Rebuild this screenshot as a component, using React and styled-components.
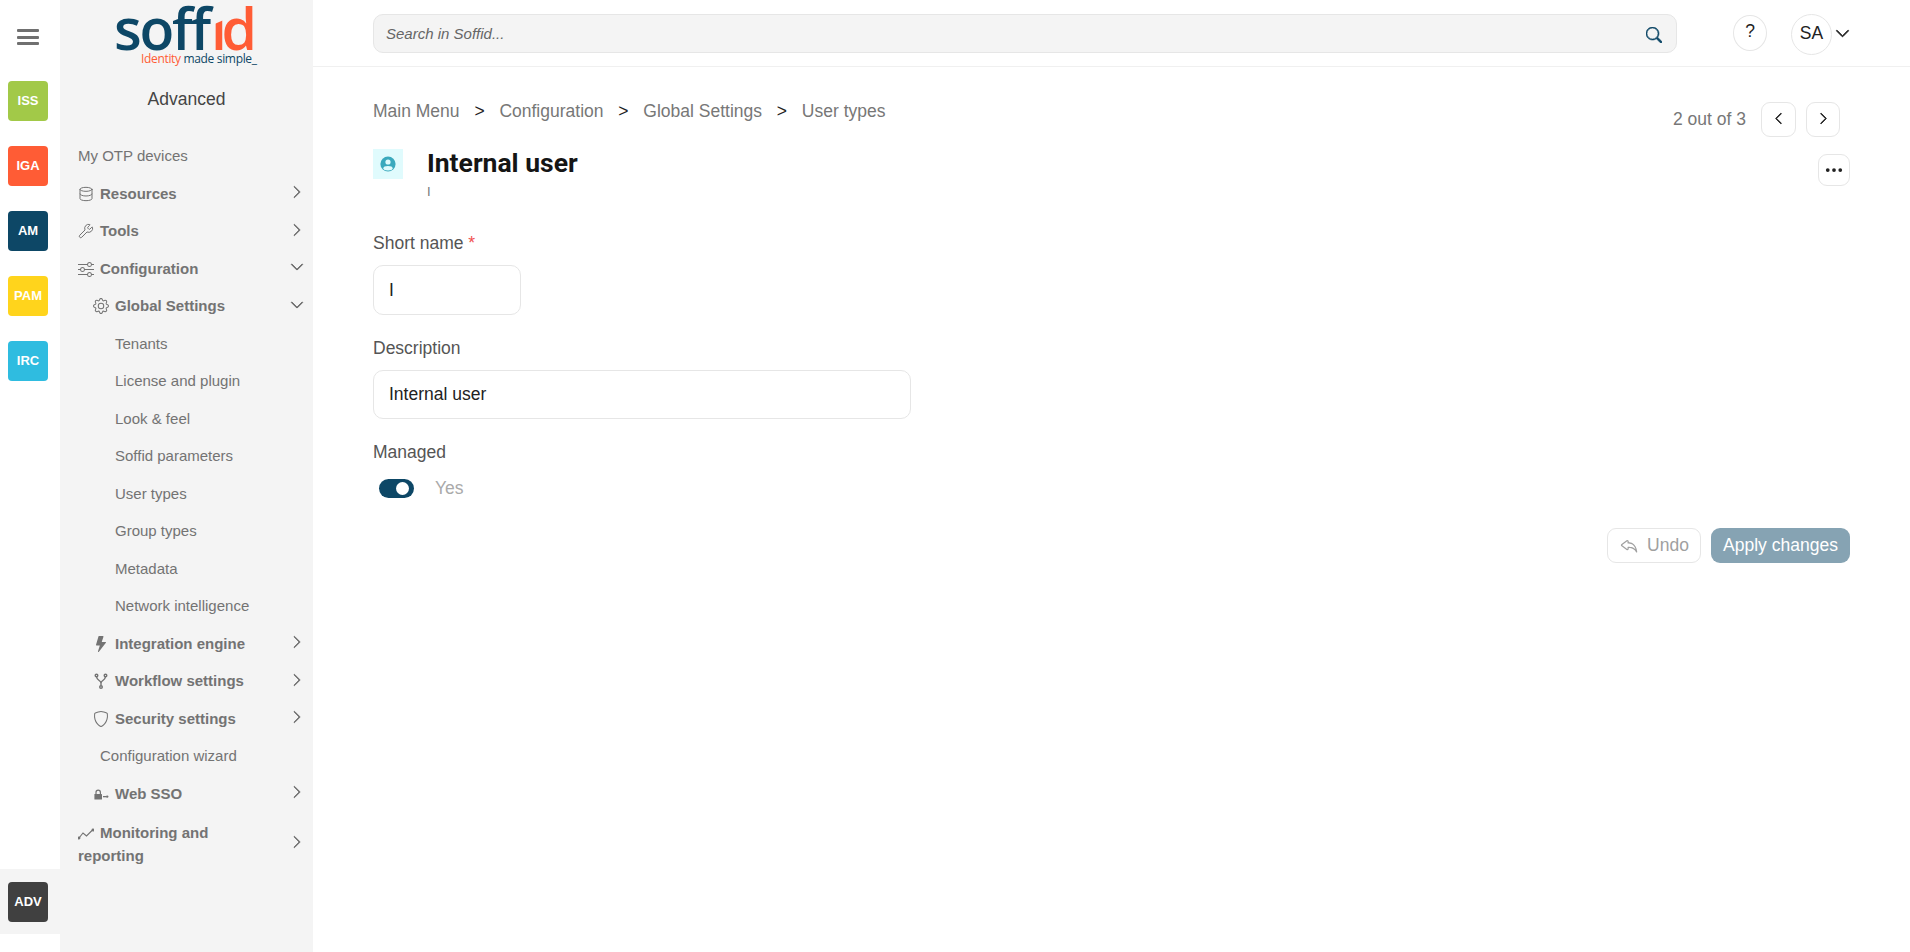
import React from 'react';
import styled, { createGlobalStyle } from 'styled-components';
import { Database, Wrench } from 'lucide-react';
import {
  BsSliders, BsGear, BsLightningFill, BsShield, BsThreeDots,
  BsChevronRight, BsChevronDown, BsChevronLeft, BsSearch, BsReply,
} from 'react-icons/bs';

const GlobalStyle = createGlobalStyle`
  html, body { margin: 0; padding: 0; background: white; }
  body { font-family: "Liberation Sans", Arial, sans-serif; }
`;

const Page = styled.div`
  display: flex;
  height: 952px;
  overflow: hidden;
`;

const Rail = styled.nav`
  width: 60px;
  flex-shrink: 0;
  display: flex;
  flex-direction: column;
  align-items: stretch;
  padding-bottom: 18px;
  box-sizing: border-box;
`;

const Burger = styled.div`
  height: 81px;
  padding: 29px 4px 0 0;
  box-sizing: border-box;
  display: flex;
  flex-direction: column;
  align-items: center;
  gap: 3.5px;
  span {
    width: 22px;
    height: 3px;
    background: #707070;
    border-radius: 1px;
  }
`;

const TileSlot = styled.div`
  display: flex;
  justify-content: center;
  padding: 12.5px 4px 12.5px 0;
  margin-top: ${(p) => (p.$first ? '-12.5px' : '0')};
  background: ${(p) => (p.$active ? '#f4f4f4' : 'transparent')};
`;

const BottomSlot = styled(TileSlot)`
  margin-top: auto;
  padding: 13px 4px 12px 0;
`;

const Tile = styled.div`
  width: 40px;
  height: 40px;
  box-sizing: border-box;
  padding-bottom: 2px;
  border-radius: 4px;
  background: ${(p) => p.$color};
  color: white;
  font-size: 13px;
  font-weight: bold;
  display: flex;
  align-items: center;
  justify-content: center;
`;

const Sidebar = styled.aside`
  width: 253px;
  flex-shrink: 0;
  background: #f4f4f4;
  box-sizing: border-box;
`;

const LogoBlock = styled.div`
  height: 137px;
  display: flex;
  flex-direction: column;
  align-items: center;
`;

const LogoSvg = styled.svg`
  display: block;
  font-family: "Open Sans", sans-serif;
  font-variant-ligatures: none;
`;

const Section = styled.div`
  margin-top: 20px;
  font-size: 17.5px;
  line-height: 24px;
  color: #444;
`;

const Menu = styled.div`
  display: flex;
  flex-direction: column;
`;

const Row = styled.div`
  min-height: 37.5px;
  display: flex;
  align-items: center;
  justify-content: space-between;
  box-sizing: border-box;
  padding: 6px 7px 6px ${(p) => p.$pad}px;
  color: #737373;
  font-size: 15px;
  line-height: 23px;
  font-weight: ${(p) => (p.$bold ? 'bold' : 'normal')};
`;

const RowLabel = styled.div`
  ${(p) => (p.$narrow ? 'width: 150px; margin-top: 3px;' : 'flex: 1;')}
  svg {
    vertical-align: -3px;
    margin-right: 6px;
  }
`;

const Arrow = styled.div`
  width: 16px;
  height: 16px;
  color: #606060;
  svg {
    display: block;
    stroke: currentColor;
    stroke-width: 0.7;
  }
`;

const Main = styled.main`
  flex: 1;
  display: flex;
  flex-direction: column;
`;

const Header = styled.header`
  height: 67px;
  box-sizing: border-box;
  border-bottom: 1px solid #f0f0f0;
  padding: 14px 60px 0;
  display: flex;
  align-items: flex-start;
`;

const Search = styled.div`
  width: 1304px;
  height: 39px;
  box-sizing: border-box;
  background: #f4f4f4;
  border: 1px solid #e6e6e6;
  border-radius: 10px;
  display: flex;
  align-items: center;
  justify-content: space-between;
  padding: 0 14px 0 12px;
  font-style: italic;
  font-size: 15px;
  color: #666;
  svg {
    color: #0d4766;
    margin-top: 2px;
    stroke: currentColor;
    stroke-width: 0.6;
  }
`;

const Help = styled.div`
  width: 34px;
  height: 36px;
  margin: 1px 0 0 56px;
  box-sizing: border-box;
  border: 1px solid #e6e6e6;
  border-radius: 50%;
  display: flex;
  align-items: center;
  justify-content: center;
  padding-bottom: 3px;
  font-size: 17.5px;
  color: #222;
`;

const Avatar = styled.div`
  width: 41px;
  height: 41px;
  margin-left: 24px;
  box-sizing: border-box;
  border: 1px solid #e6e6e6;
  border-radius: 50%;
  display: flex;
  align-items: center;
  justify-content: center;
  padding-bottom: 2px;
  font-size: 17.5px;
  color: #222;
`;

const Caret = styled.div`
  margin: 12px 0 0 3px;
  height: 15px;
  color: #222;
  svg {
    display: block;
    stroke: currentColor;
    stroke-width: 0.9;
  }
`;

const Content = styled.div`
  padding: 0 60px;
  display: flex;
  flex-direction: column;
`;

const TopLine = styled.div`
  height: 82px;
  display: flex;
  justify-content: space-between;
`;

const Crumbs = styled.div`
  display: flex;
  gap: 14.8px;
  margin-top: 32px;
  font-size: 17.5px;
  line-height: 24px;
  color: #777;
`;

const CrumbSep = styled.span`
  color: #222;
`;

const Pager = styled.div`
  display: flex;
  align-items: flex-start;
  margin: 35px 10px 0 0;
  font-size: 17.5px;
  color: #777;
`;

const PagerText = styled.div`
  line-height: 35px;
  margin-right: 15px;
`;

const SquareBtn = styled.div`
  width: ${(p) => p.$w || 35}px;
  height: ${(p) => p.$h || 35}px;
  margin-left: ${(p) => p.$gap || 0}px;
  box-sizing: border-box;
  border: 1px solid #e6e6e6;
  border-radius: 9px;
  background: white;
  color: #222;
  display: flex;
  align-items: center;
  justify-content: center;
  svg {
    margin-bottom: ${(p) => (p.$flat ? 0 : 3)}px;
    stroke: currentColor;
    stroke-width: ${(p) => (p.$flat ? 0 : 1)};
  }
`;

const TitleRow = styled.div`
  display: flex;
  align-items: flex-start;
  height: 82px;
`;

const TitleIcon = styled.div`
  width: 30px;
  height: 30px;
  background: #e0fbfd;
  display: flex;
  align-items: center;
  justify-content: center;
`;

const TitleText = styled.div`
  flex: 1;
  margin-left: 24px;
`;

const Title = styled.h1`
  margin: -2px 0 0;
  font-size: 26.5px;
  line-height: 32px;
  font-family: Roboto, sans-serif;
  font-weight: bold;
  color: #151515;
`;

const Subtitle = styled.div`
  margin-top: 6px;
  font-size: 13px;
  line-height: 14px;
  color: #777;
`;

const MoreWrap = styled.div`
  margin-top: 5px;
`;

const Label = styled.div`
  font-size: 17.5px;
  line-height: 24px;
  color: #555;
  i {
    font-style: normal;
    color: #f15050;
  }
`;

const Field = styled.div`
  width: ${(p) => p.$w}px;
  height: ${(p) => p.$h}px;
  margin: 10px 0 21px;
  box-sizing: border-box;
  border: 1px solid #e6e6e6;
  border-radius: 10px;
  padding: 0 15px;
  display: flex;
  align-items: center;
  font-size: 17.5px;
  color: #222;
`;

const ToggleRow = styled.div`
  display: flex;
  align-items: center;
  height: 24px;
  margin-top: 12px;
  padding-left: 6px;
  font-size: 17.5px;
  color: #aaa;
`;

const Toggle = styled.div`
  width: 35px;
  height: 19px;
  border-radius: 10px;
  background: #0d4766;
  margin-right: 21px;
  display: flex;
  align-items: center;
  justify-content: flex-end;
  padding-right: 5px;
  box-sizing: border-box;
  &::after {
    content: '';
    width: 13px;
    height: 13px;
    border-radius: 50%;
    background: white;
  }
`;

const Actions = styled.div`
  display: flex;
  justify-content: flex-end;
  gap: 10px;
  margin-top: 28px;
`;

const UndoBtn = styled.div`
  width: 94px;
  height: 35px;
  box-sizing: border-box;
  border: 1px solid #e6e6e6;
  border-radius: 9px;
  display: flex;
  align-items: center;
  justify-content: center;
  gap: 8px;
  font-size: 17.5px;
  color: #a0a0a0;
  svg { margin-bottom: 2px; }
`;

const ApplyBtn = styled.div`
  width: 139px;
  height: 35px;
  border-radius: 9px;
  background: #86a3b3;
  color: white;
  font-size: 17.5px;
  display: flex;
  align-items: center;
  justify-content: center;
`;

// the wordmark, placed in the sidebar's own coordinates
const Logo = () => (
  <LogoSvg width="253" height="67" viewBox="0 0 253 67">
    <text x="151" y="50" fontSize="57" fontWeight="600" fill="#ff5c35" textLength="46" lengthAdjust="spacing">id</text>
    {/* the logo's i has no dot and a slanted top */}
    <polygon points="150,0 170,0 170,19 166,19 150,26" fill="#f4f4f4" />
    <text x="54" y="50" fontSize="57" fontWeight="600" fill="#0d4766" textLength="97" lengthAdjust="spacing">soff</text>
    <text x="81" y="63" fontSize="12" fill="#0d4766" textLength="116" lengthAdjust="spacing">
      <tspan fill="#ff5c35">Identity</tspan> made simple_
    </text>
  </LogoSvg>
);

// the icons react-icons does not have in this shape
const ForkIcon = () => (
  <svg width="16" height="16" viewBox="0 0 16 16" fill="none" stroke="currentColor" strokeWidth="1.4">
    <circle cx="3.5" cy="2.5" r="1.3" />
    <circle cx="12.5" cy="2.5" r="1.3" />
    <circle cx="8" cy="14" r="1.3" />
    <path d="M3.6 4c.3 3.5 4.4 3.5 4.4 6v2.5M12.4 4c-.3 3.5-4.4 3.5-4.4 6" />
  </svg>
);

const LockKeyIcon = () => (
  <svg width="16" height="16" viewBox="0 0 16 16" fill="currentColor">
    <path d="M2.4 8V6.4a2.8 2.8 0 0 1 5.6 0V8H6.8V6.4a1.6 1.6 0 0 0-3.2 0V8z" />
    <rect x="1.4" y="8" width="7.6" height="5.5" rx=".5" />
    <rect x="10" y="10" width="3.4" height="1.3" />
    <circle cx="14.2" cy="10.6" r="1.2" />
  </svg>
);

const TrendIcon = () => (
  <svg width="16" height="16" viewBox="0 0 16 16" fill="none" stroke="currentColor" strokeWidth="1.1">
    <path d="M1 13l4-5 3.5 3 6-6" />
    <circle cx="1" cy="13" r=".9" fill="currentColor" />
    <circle cx="15" cy="5" r=".9" fill="currentColor" />
  </svg>
);

const PersonBadge = () => (
  <svg width="16" height="16" viewBox="0 0 16 16">
    <circle cx="8" cy="8" r="7.6" fill="#3aa9bd" />
    <circle cx="8" cy="6" r="2.6" fill="#e0fbfd" />
    <ellipse cx="8" cy="12.2" rx="4.6" ry="2.2" fill="#e0fbfd" />
  </svg>
);

const tiles = [
  { name: 'ISS', color: '#a2c948' },
  { name: 'IGA', color: '#ff5c35' },
  { name: 'AM', color: '#0d4766' },
  { name: 'PAM', color: '#ffd41c' },
  { name: 'IRC', color: '#2fbce0' },
];

const menu = [
  { label: 'My OTP devices', pad: 18 },
  { label: 'Resources', pad: 18, icon: <Database size={16} strokeWidth={1.5} />, arrow: 'right' },
  { label: 'Tools', pad: 18, icon: <Wrench size={16} strokeWidth={1.5} />, arrow: 'right' },
  { label: 'Configuration', pad: 18, icon: <BsSliders size={16} />, arrow: 'down' },
  { label: 'Global Settings', pad: 33, icon: <BsGear size={16} />, arrow: 'down' },
  { label: 'Tenants', pad: 55 },
  { label: 'License and plugin', pad: 55 },
  { label: 'Look & feel', pad: 55 },
  { label: 'Soffid parameters', pad: 55 },
  { label: 'User types', pad: 55 },
  { label: 'Group types', pad: 55 },
  { label: 'Metadata', pad: 55 },
  { label: 'Network intelligence', pad: 55 },
  { label: 'Integration engine', pad: 33, icon: <BsLightningFill size={16} />, arrow: 'right' },
  { label: 'Workflow settings', pad: 33, icon: <ForkIcon />, arrow: 'right' },
  { label: 'Security settings', pad: 33, icon: <BsShield size={16} />, arrow: 'right' },
  { label: 'Configuration wizard', pad: 40 },
  { label: 'Web SSO', pad: 33, icon: <LockKeyIcon />, arrow: 'right' },
  { label: 'Monitoring and reporting', pad: 18, icon: <TrendIcon />, arrow: 'right', narrow: true },
];

const MenuRow = ({ item }) => (
  <Row $pad={item.pad} $bold={!!item.icon}>
    <RowLabel $narrow={item.narrow}>
      {item.icon}
      {item.label}
    </RowLabel>
    {item.arrow && (
      <Arrow>{item.arrow === 'down' ? <BsChevronDown size={14} /> : <BsChevronRight size={14} />}</Arrow>
    )}
  </Row>
);

const App = () => (
  <>
    <GlobalStyle />
    <Page>
      <Rail>
        <Burger>
          <span />
          <span />
          <span />
        </Burger>
        {tiles.map((t, i) => (
          <TileSlot key={t.name} $first={i === 0}>
            <Tile $color={t.color}>{t.name}</Tile>
          </TileSlot>
        ))}
        <BottomSlot $active>
          <Tile $color="#404040">ADV</Tile>
        </BottomSlot>
      </Rail>
      <Sidebar>
        <LogoBlock>
          <Logo />
          <Section>Advanced</Section>
        </LogoBlock>
        <Menu>
          {menu.map((item) => <MenuRow key={item.label} item={item} />)}
        </Menu>
      </Sidebar>
      <Main>
        <Header>
          <Search>
            Search in Soffid...
            <BsSearch size={16} />
          </Search>
          <Help>?</Help>
          <Avatar>SA</Avatar>
          <Caret><BsChevronDown size={15} /></Caret>
        </Header>
        <Content>
          <TopLine>
            <Crumbs>
              <span>Main Menu</span><CrumbSep>&gt;</CrumbSep>
              <span>Configuration</span><CrumbSep>&gt;</CrumbSep>
              <span>Global Settings</span><CrumbSep>&gt;</CrumbSep>
              <span>User types</span>
            </Crumbs>
            <Pager>
              <PagerText>2 out of 3</PagerText>
              <SquareBtn><BsChevronLeft size={13} /></SquareBtn>
              <SquareBtn $gap={10} $w={34}><BsChevronRight size={13} /></SquareBtn>
            </Pager>
          </TopLine>
          <TitleRow>
            <TitleIcon><PersonBadge /></TitleIcon>
            <TitleText>
              <Title>Internal user</Title>
              <Subtitle>I</Subtitle>
            </TitleText>
            <MoreWrap>
              <SquareBtn $w={32} $h={32} $flat><BsThreeDots size={20} /></SquareBtn>
            </MoreWrap>
          </TitleRow>
          <Label>Short name <i>*</i></Label>
          <Field $w={148} $h={50}>I</Field>
          <Label>Description</Label>
          <Field $w={538} $h={49}>Internal user</Field>
          <Label>Managed</Label>
          <ToggleRow>
            <Toggle />
            Yes
          </ToggleRow>
          <Actions>
            <UndoBtn><BsReply size={20} />Undo</UndoBtn>
            <ApplyBtn>Apply changes</ApplyBtn>
          </Actions>
        </Content>
      </Main>
    </Page>
  </>
);

export default App;
